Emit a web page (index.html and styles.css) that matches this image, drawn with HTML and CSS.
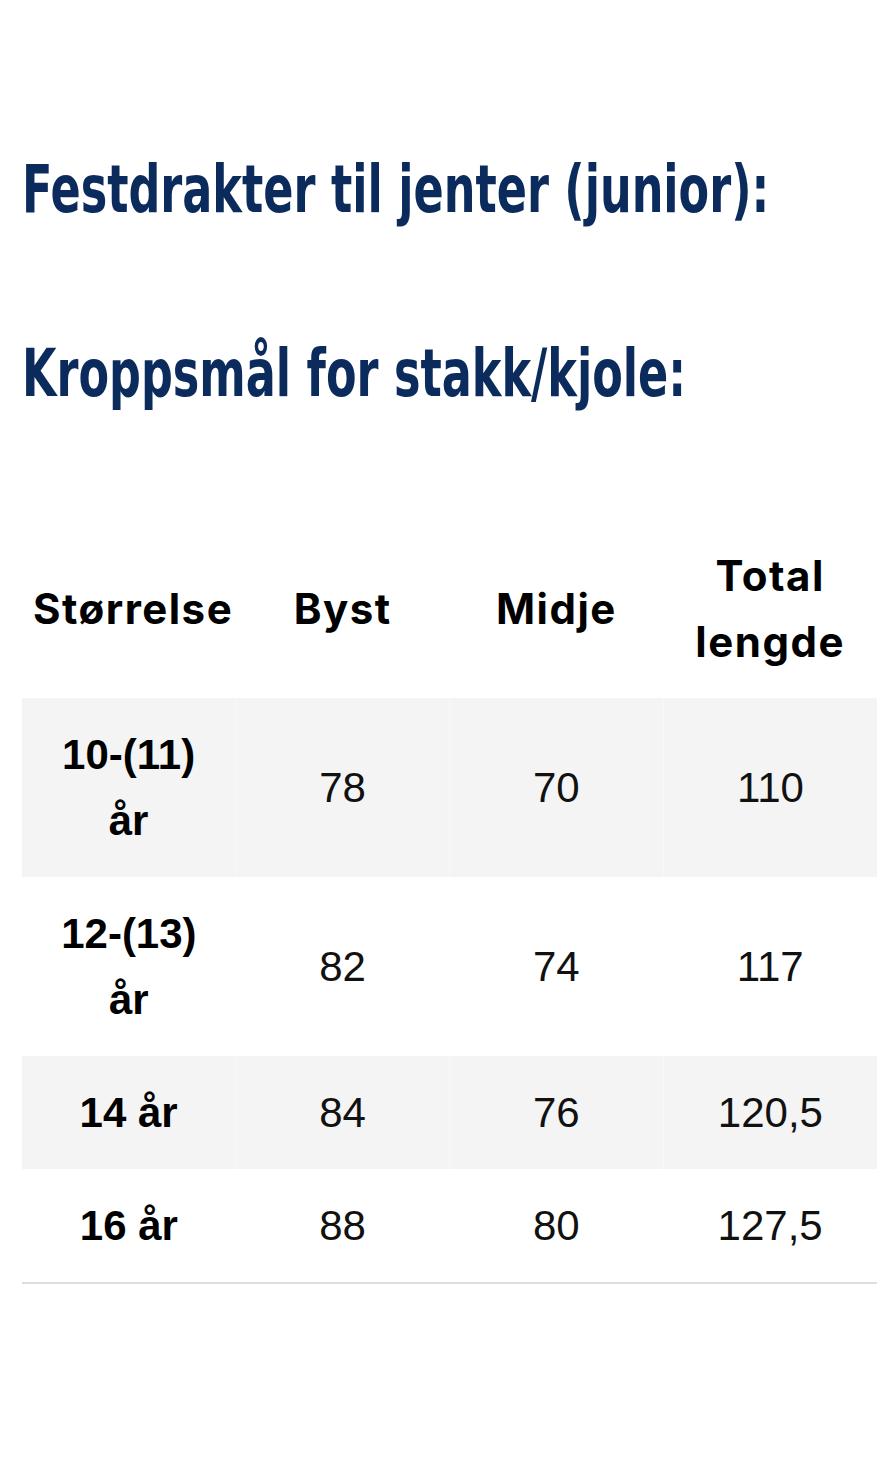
FILE: index.html
```html
<!DOCTYPE html>
<html lang="no">
<head>
<meta charset="utf-8">
<title>Festdrakter til jenter (junior)</title>
<link rel="stylesheet" href="styles.css">
</head>
<body>
<main class="page">
  <h1 class="title"><span class="title-text">Festdrakter til jenter (junior):</span></h1>
  <h2 class="title title-sub"><span class="title-text">Kroppsmål for stakk/kjole:</span></h2>
  <table class="sizes">
    <thead>
      <tr>
        <th>Størrelse</th>
        <th>Byst</th>
        <th>Midje</th>
        <th>Total lengde</th>
      </tr>
    </thead>
    <tbody>
      <tr class="shade">
        <td class="label">10-(11)<br>år</td>
        <td>78</td>
        <td>70</td>
        <td>110</td>
      </tr>
      <tr>
        <td class="label">12-(13)<br>år</td>
        <td>82</td>
        <td>74</td>
        <td>117</td>
      </tr>
      <tr class="shade">
        <td class="label">14 år</td>
        <td>84</td>
        <td>76</td>
        <td>120,5</td>
      </tr>
      <tr class="last">
        <td class="label">16 år</td>
        <td>88</td>
        <td>80</td>
        <td>127,5</td>
      </tr>
    </tbody>
  </table>
</main>
</body>
</html>
```
FILE: styles.css
```css
html, body {
  margin: 0;
  padding: 0;
  background: #ffffff;
}

.page {
  padding: 150px 2px 0 22px;
}

.title {
  margin: 0;
  font-family: "DejaVu Sans Condensed", "DejaVu Sans", sans-serif;
  font-weight: bold;
  font-size: 66px;
  line-height: 80px;
  color: #0b2b5c;
  white-space: nowrap;
  overflow: hidden;
}

.title-text {
  display: inline-block;
  transform: scaleX(0.75);
  transform-origin: left center;
}

.title-sub {
  margin-top: 104px;
}

.sizes {
  margin-top: 105px;
  width: 855px;
  table-layout: fixed;
  border-collapse: collapse;
  color: #000;
}

.sizes th,
.sizes td {
  padding: 23.5px 11px;
  text-align: center;
  vertical-align: middle;
  line-height: 66px;
  font-size: 42px;
}

.sizes th {
  font-family: Inter, "Liberation Sans", sans-serif;
  font-weight: 700;
  letter-spacing: 1.5px;
}

.sizes td {
  font-family: "Liberation Sans", Arial, sans-serif;
  font-weight: normal;
  color: #111;
}

.sizes tr.shade td + td {
  border-left: 1px solid #f8f8f8;
}

.sizes td.label {
  font-weight: bold;
  color: #000;
}

.sizes tr.shade td {
  background: #f4f4f4;
}

.sizes tr.last td {
  border-bottom: 2px solid #dedede;
}
```
